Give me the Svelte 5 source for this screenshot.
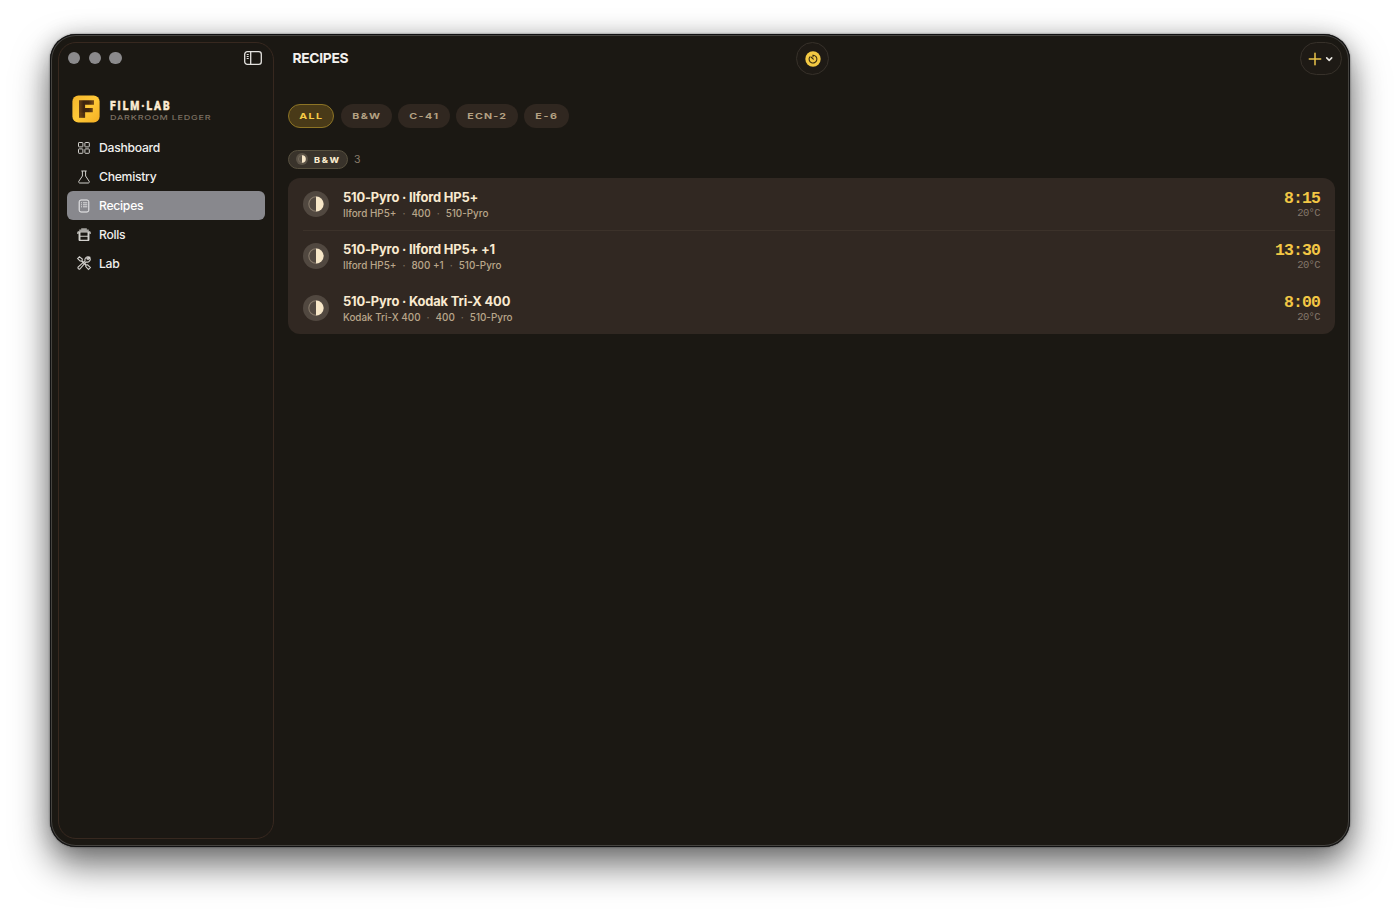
<script>
  const nav = [
    { id: 'dashboard', label: 'Dashboard' },
    { id: 'chemistry', label: 'Chemistry' },
    { id: 'recipes', label: 'Recipes' },
    { id: 'rolls', label: 'Rolls' },
    { id: 'lab', label: 'Lab' }
  ];
  const filters = [
    { label: 'ALL', w: 46, t: 22 },
    { label: 'B&W', w: 51, t: 27 },
    { label: 'C-41', w: 51.5, t: 28 },
    { label: 'ECN-2', w: 61.5, t: 38 },
    { label: 'E-6', w: 44.5, t: 21 }
  ];
  const recipes = [
    { name: '510-Pyro · Ilford HP5+', film: 'Ilford HP5+', iso: '400', time: '8:15' },
    { name: '510-Pyro · Ilford HP5+ +1', film: 'Ilford HP5+', iso: '800 +1', time: '13:30' },
    { name: '510-Pyro · Kodak Tri-X 400', film: 'Kodak Tri-X 400', iso: '400', time: '8:00' }
  ];
</script>

{#snippet half(size)}
  <svg width={size} height={size} viewBox="0 0 16 16">
    <circle cx="8" cy="8" r="7.200" fill="none" stroke="#85796a" stroke-width="1.100" />
    <path d="M8 .4a7.600 7.600 0 0 1 0 15.200z" fill="#f7e7c8" />
  </svg>
{/snippet}

<div class="window">
  <aside>
    <div class="titlebar">
      <div class="lights"><i></i><i></i><i></i></div>
      <svg width="18" height="14" viewBox="0 0 18 14" fill="none" stroke="#e4e2df" stroke-width="1.300">
        <rect x=".7" y=".7" width="16.600" height="12.600" rx="2.600" />
        <path d="M6.700 1v12" /><path d="M2.700 3.500h2M2.700 5.500h2M2.700 7.500h2" stroke-width="1" />
      </svg>
    </div>
    <div class="brand">
      <svg width="28" height="28" viewBox="0 0 28 28">
        <defs>
          <linearGradient id="gold" x1="0" y1="0" x2="1" y2="1"><stop stop-color="#f5b52b" /><stop offset=".5" stop-color="#ffc938" /><stop offset="1" stop-color="#f5ae22" /></linearGradient>
          <linearGradient id="ink" x1="0" y1="0" x2="1" y2="0"><stop stop-color="#6b4214" /><stop offset=".3" stop-color="#3d2410" /><stop offset=".65" stop-color="#43270f" /><stop offset="1" stop-color="#7d5016" /></linearGradient>
        </defs>
        <rect x=".4" y=".4" width="27.200" height="27.200" rx="6" fill="url(#gold)" />
        <path d="M7 5.200h15v4.600h-8.900v3.300h7.700v4.200h-7.700v5.500H7z" fill="url(#ink)" />
        <path d="M7 18.200h6.100M7 20h6.100M7 21.800h6.100" stroke="#7c5015" stroke-width=".5" />
      </svg>
      <svg class="brandtext" width="104" height="26" viewBox="0 0 104 26">
        <text transform="scale(.86 1)" x="0" y="15" class="film" textLength="69.500" lengthAdjust="spacing">FILM·LAB</text>
        <text transform="scale(1.35 1)" x="0" y="25" class="ledger" textLength="74.500" lengthAdjust="spacing">DARKROOM LEDGER</text>
      </svg>
    </div>
    <nav>
      {#each nav as item}
        <div class="item" class:active={item.id === 'recipes'}>
          <svg width="16" height="16" viewBox="0 0 16 16" fill="none" stroke="#d2d0cc" stroke-width="1">
            {#if item.id === 'dashboard'}
              <rect x="2.500" y="2.500" width="4.400" height="4.400" rx=".6" /><rect x="8.900" y="2.500" width="4.400" height="4.400" rx=".6" />
              <rect x="2.500" y="8.900" width="4.400" height="4.400" rx=".6" /><rect x="8.900" y="8.900" width="4.400" height="4.400" rx=".6" />
            {:else if item.id === 'chemistry'}
              <path d="M5.300 2h5.400M6.400 2v5L2.900 12.200c-.6 1 0 1.800 1 1.800h8.200c1 0 1.600-.8 1-1.800L9.600 7V2" />
            {:else if item.id === 'recipes'}
              <rect x="3.200" y="2" width="9.600" height="12" rx="1.800" stroke="#f1f1f2" />
              <path d="M5 4.800h1M7 4.800h4.300M5 6.800h1M7 6.800h4.300M5 8.800h1M7 8.800h4.300" stroke="#f1f1f2" stroke-width=".8" />
            {:else if item.id === 'rolls'}
              <path d="M5.200 1.300h5.600v1.200h2v1.700H3.200V2.500h2z" fill="#a5a39f" stroke="none" />
              <path d="M1.900 7V5.600q0-.8.800-.8h10.600q.8 0 .8.800V7" stroke-width="1.200" />
              <path d="M3.500 5v8.500M12.500 5v8.500" stroke-width="1.900" />
              <path d="M3 9.300h10M3 13.400h10" stroke-width="1.100" />
            {:else}
              <path d="M1.600 3.600 3.400 1.800 6.300 4.100 6.100 5.900 10.200 10l1.400-.1 2.800 2.700-1.900 1.900-2.700-2.900V10.200L5.600 6.100 4.100 6z" stroke-width="1.100" />
              <path d="M13.300 2a3.200 3.200 0 0 0-4.300 3.900L2.100 12a1.400 1.400 0 0 0 1.900 1.900l6.100-6.900a3.200 3.200 0 0 0 3.900-4.300l-1.900 1.900-1.200-.9z" stroke-width="1.100" />
            {/if}
          </svg>
          <span>{item.label}</span>
        </div>
      {/each}
    </nav>
  </aside>

  <main>
    <header>
      <h1>RECIPES</h1>
      <button class="timer" aria-label="Timer">
        <svg width="16" height="16" viewBox="0 0 16 16">
          <circle cx="8" cy="8" r="7.700" fill="#f3c943" />
          <path d="M8 4.200A3.900 3.900 0 1 1 4.700 6M8 4v1.800M6 6 8.300 8.200" fill="none" stroke="#3a2d10" stroke-width="1.100" stroke-linecap="round" />
        </svg>
      </button>
      <button class="add" aria-label="Add">
        <svg width="26" height="14" viewBox="0 0 26 14" fill="none" stroke-linecap="round">
          <path d="M7 1.300v11.400M1.300 7h11.400" stroke="#e9c34a" stroke-width="1.500" />
          <path d="m18.700 5.900 2.500 2.400 2.500-2.400" stroke="#e8e5df" stroke-width="1.600" stroke-linejoin="round" />
        </svg>
      </button>
    </header>

    <div class="filters">
      {#each filters as f, i}
        <div class="pill" class:on={i === 0} style="width:{f.w}px">
          <svg width={f.t} height="10"><text transform="scale(1.3 1)" x="-.6" y="8.200" textLength={f.t / 1.3 + 0.6} lengthAdjust="spacing">{f.label}</text></svg>
        </div>
      {/each}
    </div>

    <div class="group">
      <div class="tag">
        <b>{@render half(8)}</b>
        <svg width="26" height="9"><text transform="scale(1.3 1)" x="0" y="8" textLength="19.300" lengthAdjust="spacing">B&amp;W</text></svg>
      </div>
      <span>3</span>
    </div>

    <section>
      {#each recipes as r}
        <article>
          <div class="badge">{@render half(16)}</div>
          <div class="info">
            <h2>{r.name}</h2>
            <p><span>{r.film}</span><em>·</em><span>{r.iso}</span><em>·</em><span>510-Pyro</span></p>
          </div>
          <div class="time"><strong>{r.time}</strong><small>20°C</small></div>
        </article>
      {/each}
    </section>
  </main>
</div>

<style>
  :global(body) { background: #fff; }
  :global(#app) { display: flow-root; height: 913px; overflow: hidden; }
  * { box-sizing: border-box; }
  h1, h2, p { margin: 0; }
  svg { display: block; flex: none; overflow: visible; }
  .window {
    width: 1300px; height: 812.500px; margin: 34px 50px 0; padding: 8px; display: flex;
    border-radius: 26px; background: #1b1813; font-family: Inter, sans-serif;
    box-shadow: inset 0 0 0 1px #111112, inset 0 0 0 2px #45433f, 0 0 2px rgba(0,0,0,.6), 0 18px 36px rgba(0,0,0,.56), 0 0 22px rgba(0,0,0,.16);
  }
  aside { width: 216px; height: 796.500px; border: 1px solid #37281f; border-radius: 18px; padding: 0 8px; flex: none; }
  .titlebar { height: 30px; display: flex; align-items: center; justify-content: space-between; padding: 0 3px 0 1px; }
  .lights { display: flex; gap: 8.300px; }
  .lights i { width: 12.400px; height: 12.400px; border-radius: 50%; background: #8b8a8c; }
  .brand { display: flex; gap: 10px; margin: 22px 0 0 5px; height: 28px; }
  .film { font: 900 12px Roboto, sans-serif; fill: #fbebd1; stroke: #fbebd1; stroke-width: .4px; }
  .ledger { font: 500 6.700px Inter, sans-serif; fill: #7b7062; }
  nav { margin-top: 10.400px; }
  .item { height: 28.900px; padding-left: 9px; display: flex; align-items: center; gap: 7px; border-radius: 6px; color: #f0efed; font-size: 12.200px; font-weight: 550; letter-spacing: -.28px; }
  .active { background: #88888d; color: #fff; }
  main { flex: 1; padding: 0 7px 0 14px; display: flex; flex-direction: column; min-width: 0; }
  header { height: 31px; display: grid; grid-template-columns: 1fr 33px 1fr; align-items: center; }
  h1 { font-size: 13.800px; line-height: 17px; padding-bottom: 1px; font-weight: 650; color: #f3f1ee; padding-left: 4.500px; letter-spacing: -.3px; }
  button { border: 1px solid #37312a; background: #1e1a15; border-radius: 17px; height: 33px; padding: 0; display: flex; align-items: center; justify-content: center; }
  .timer { width: 33px; position: relative; left: 1px; }
  .add { width: 42px; justify-self: end; margin-right: -7px; }
  .filters { display: flex; gap: 6.500px; margin-top: 31px; }
  .pill { height: 24px; border-radius: 12px; background: #302720; display: flex; align-items: center; justify-content: center; flex: none; }
  .pill text { font: 700 8.200px Inter, sans-serif; fill: #b4a183; }
  .on { background: #493a18; border: 1px solid #8d7425; }
  .pill.on text { fill: #f5cb46; }
  .group { display: flex; align-items: center; margin-top: 21px; height: 20px; gap: 6.500px; color: #8a7d6b; font-size: 10.500px; }
  .tag { width: 59.500px; height: 19px; border: 1px solid #57503f; border-radius: 10px; background: #39332b; display: flex; align-items: center; padding-left: 7px; gap: 6px; }
  .tag b { width: 12px; height: 12px; border-radius: 50%; background: #5b5347; display: grid; place-items: center; }
  .tag text { font: 800 7px Inter, sans-serif; fill: #f8e9cc; }
  section { margin-top: 9px; height: 156px; border-radius: 12px; background: #312822; display: flex; flex-direction: column; overflow: hidden; }
  article { height: 52px; display: flex; align-items: center; padding: 0 15px; position: relative; flex: none; }
  article:first-child::after { content: ''; position: absolute; left: 15px; right: 0; bottom: -.5px; height: 1px; background: #3c322a; }
  .badge { width: 26px; height: 26px; border-radius: 50%; background: #514840; display: grid; place-items: center; margin-right: 14px; }
  .info { flex: 1; padding-top: 2px; }
  h2 { font-size: 12.900px; line-height: 16px; font-weight: 650; color: #f9ead0; letter-spacing: -.17px; }
  p { font-size: 9.900px; line-height: 14px; color: #b9a68a; display: flex; font-weight: 500; }
  em { font-style: normal; color: #796c5b; width: 15px; text-align: center; }
  .time { display: flex; flex-direction: column; align-items: flex-end; padding-top: 1px; }
  strong { font: 700 16.500px/17px "Liberation Mono", monospace; letter-spacing: -.9px; color: #f3c745; }
  small { font: 10.500px/12px "Liberation Mono", monospace; letter-spacing: -.6px; color: #84776a; }
</style>
